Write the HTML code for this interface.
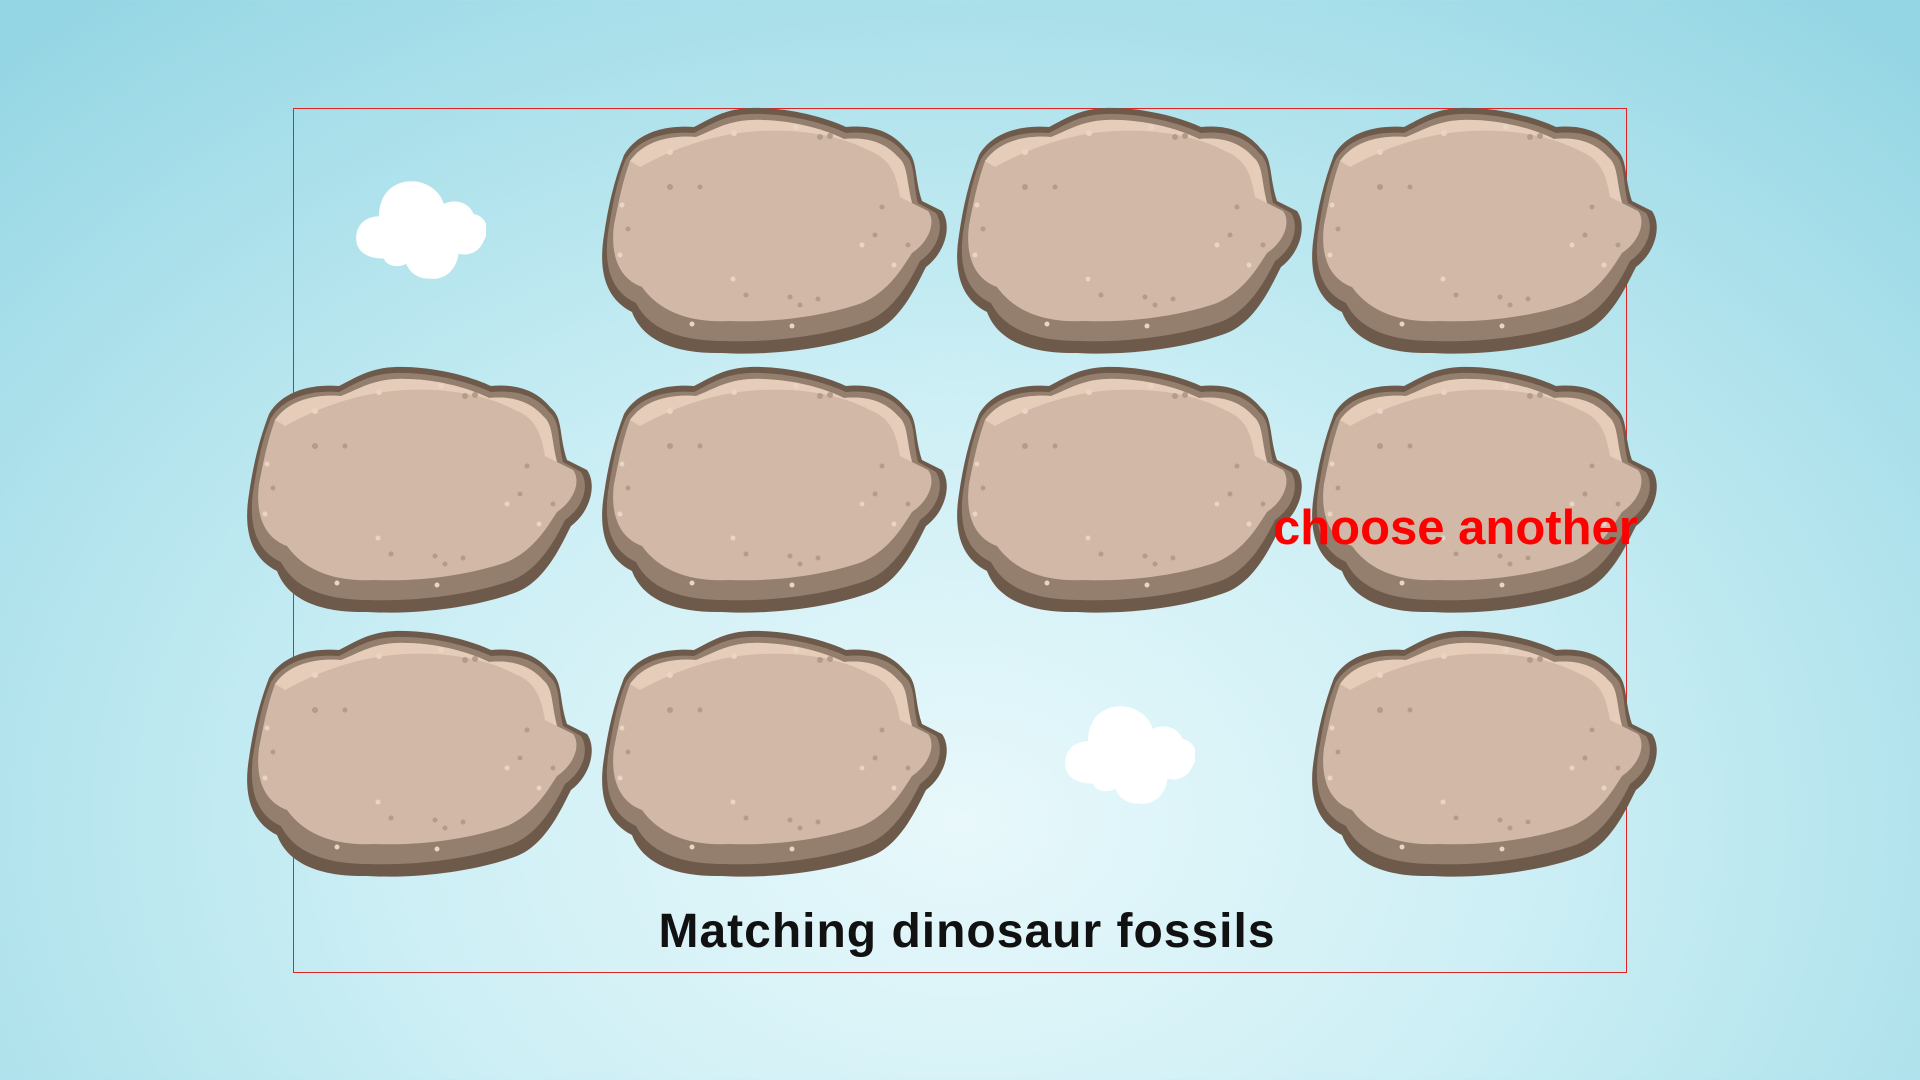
<!DOCTYPE html>
<html><head><style>
html,body{margin:0;padding:0;width:1920px;height:1080px;overflow:hidden;}
body{background:radial-gradient(ellipse 1400px 1050px at 960px 820px,#e8f8fb 0%,#cdeff5 40%,#a8dfea 80%,#95d6e4 100%);position:relative;font-family:"Liberation Sans",sans-serif;}
.frame{position:absolute;left:293px;top:108px;width:1334px;height:865px;border:1px solid #e02424;box-sizing:border-box;}
.rock{position:absolute;width:350px;height:250px;}
.cloud{position:absolute;}
.title{position:absolute;left:0;width:1934px;text-align:center;top:904px;font-size:48px;font-weight:bold;color:#111;letter-spacing:1px;}
.choose{position:absolute;left:1273px;top:500px;font-size:49px;font-weight:bold;color:#ff0000;}
</style></head><body>
<svg width="0" height="0" style="position:absolute">
<defs>
<g id="r">
<path d="M4,128 C-2,165 6,192 32,205 C42,232 72,247 122,246 C172,249 232,241 272,226 C302,214 318,175 326,160 C346,145 352,118 342,104 L322,94 C314,70 318,52 306,42 C290,22 268,18 246,20 C220,8 182,0 150,1 C124,2 110,12 94,20 C68,18 38,24 24,48 C14,74 8,100 4,128Z" fill="#6d5a4b"/>
<path d="M8,126 C4,158 10,184 36,196 C48,220 76,234 124,234 C172,236 230,228 268,214 C296,202 312,170 320,154 C340,140 344,118 336,106 L318,96 C312,72 316,56 304,46 C290,28 268,24 246,26 C220,14 182,6 150,7 C124,8 110,18 94,26 C68,24 40,30 26,52 C16,76 12,102 8,126Z" fill="#947e6d"/>
<path d="M14,118 C10,150 20,172 42,180 C60,205 90,216 130,214 C178,216 228,208 262,196 C290,184 304,158 312,146 C330,134 336,114 328,104 L312,96 C306,72 308,58 298,50 C284,34 264,30 244,32 C220,20 184,12 152,13 C126,14 112,24 96,30 C70,28 44,34 30,54 C22,76 18,98 14,118Z" fill="#d2b9a7"/>
<path d="M30,54 C44,34 70,28 96,30 C112,24 126,14 152,13 C184,12 220,20 244,32 C264,30 284,34 298,50 C308,58 306,72 312,96 L300,90 C296,66 290,52 270,44 C240,28 200,22 160,24 C120,26 80,38 40,60Z" fill="#e6cdb9"/>
<g fill="#b49c8a"><circle cx="70" cy="80" r="3"/><circle cx="100" cy="80" r="2.5"/><circle cx="220" cy="30" r="3"/><circle cx="230" cy="29" r="3"/><circle cx="282" cy="100" r="2.5"/><circle cx="275" cy="128" r="2.5"/><circle cx="190" cy="190" r="2.5"/><circle cx="200" cy="198" r="2.5"/><circle cx="218" cy="192" r="2.5"/><circle cx="146" cy="188" r="2.5"/><circle cx="28" cy="122" r="2.5"/><circle cx="308" cy="138" r="2.5"/></g>
<g fill="#e8d5c6"><circle cx="70" cy="45" r="3"/><circle cx="134" cy="26" r="3"/><circle cx="196" cy="20" r="3"/><circle cx="22" cy="98" r="2.5"/><circle cx="20" cy="148" r="2.5"/><circle cx="262" cy="138" r="2.5"/><circle cx="294" cy="158" r="2.5"/><circle cx="192" cy="219" r="2.5"/><circle cx="92" cy="217" r="2.5"/><circle cx="133" cy="172" r="2.5"/></g>
</g>
<g id="c">
<path d="M20,30 C20,12 32,0 50,2 C62,4 70,12 72,20 C80,16 92,18 96,28 C106,30 110,40 104,50 C100,60 90,62 84,60 C82,74 72,82 60,80 C50,80 44,74 42,68 C36,72 26,70 24,64 C8,64 0,56 2,44 C4,34 12,30 20,30Z" fill="#fff"/>
</g>
</defs>
</svg>
<div class="frame"></div>
<svg class="rock" style="left:600px;top:107px" viewBox="0 0 350 250"><use href="#r"/></svg>
<svg class="rock" style="left:955px;top:107px" viewBox="0 0 350 250"><use href="#r"/></svg>
<svg class="rock" style="left:1310px;top:107px" viewBox="0 0 350 250"><use href="#r"/></svg>
<svg class="rock" style="left:245px;top:366px" viewBox="0 0 350 250"><use href="#r"/></svg>
<svg class="rock" style="left:600px;top:366px" viewBox="0 0 350 250"><use href="#r"/></svg>
<svg class="rock" style="left:955px;top:366px" viewBox="0 0 350 250"><use href="#r"/></svg>
<svg class="rock" style="left:1310px;top:366px" viewBox="0 0 350 250"><use href="#r"/></svg>
<svg class="rock" style="left:245px;top:630px" viewBox="0 0 350 250"><use href="#r"/></svg>
<svg class="rock" style="left:600px;top:630px" viewBox="0 0 350 250"><use href="#r"/></svg>
<svg class="rock" style="left:1310px;top:630px" viewBox="0 0 350 250"><use href="#r"/></svg>
<svg class="cloud" style="left:354px;top:179px" width="132" height="102" viewBox="0 0 106 82" preserveAspectRatio="none"><use href="#c"/></svg>
<svg class="cloud" style="left:1063px;top:704px" width="132" height="102" viewBox="0 0 106 82" preserveAspectRatio="none"><use href="#c"/></svg>
<div class="choose">choose another</div>
<div class="title">Matching dinosaur fossils</div>
</body></html>
